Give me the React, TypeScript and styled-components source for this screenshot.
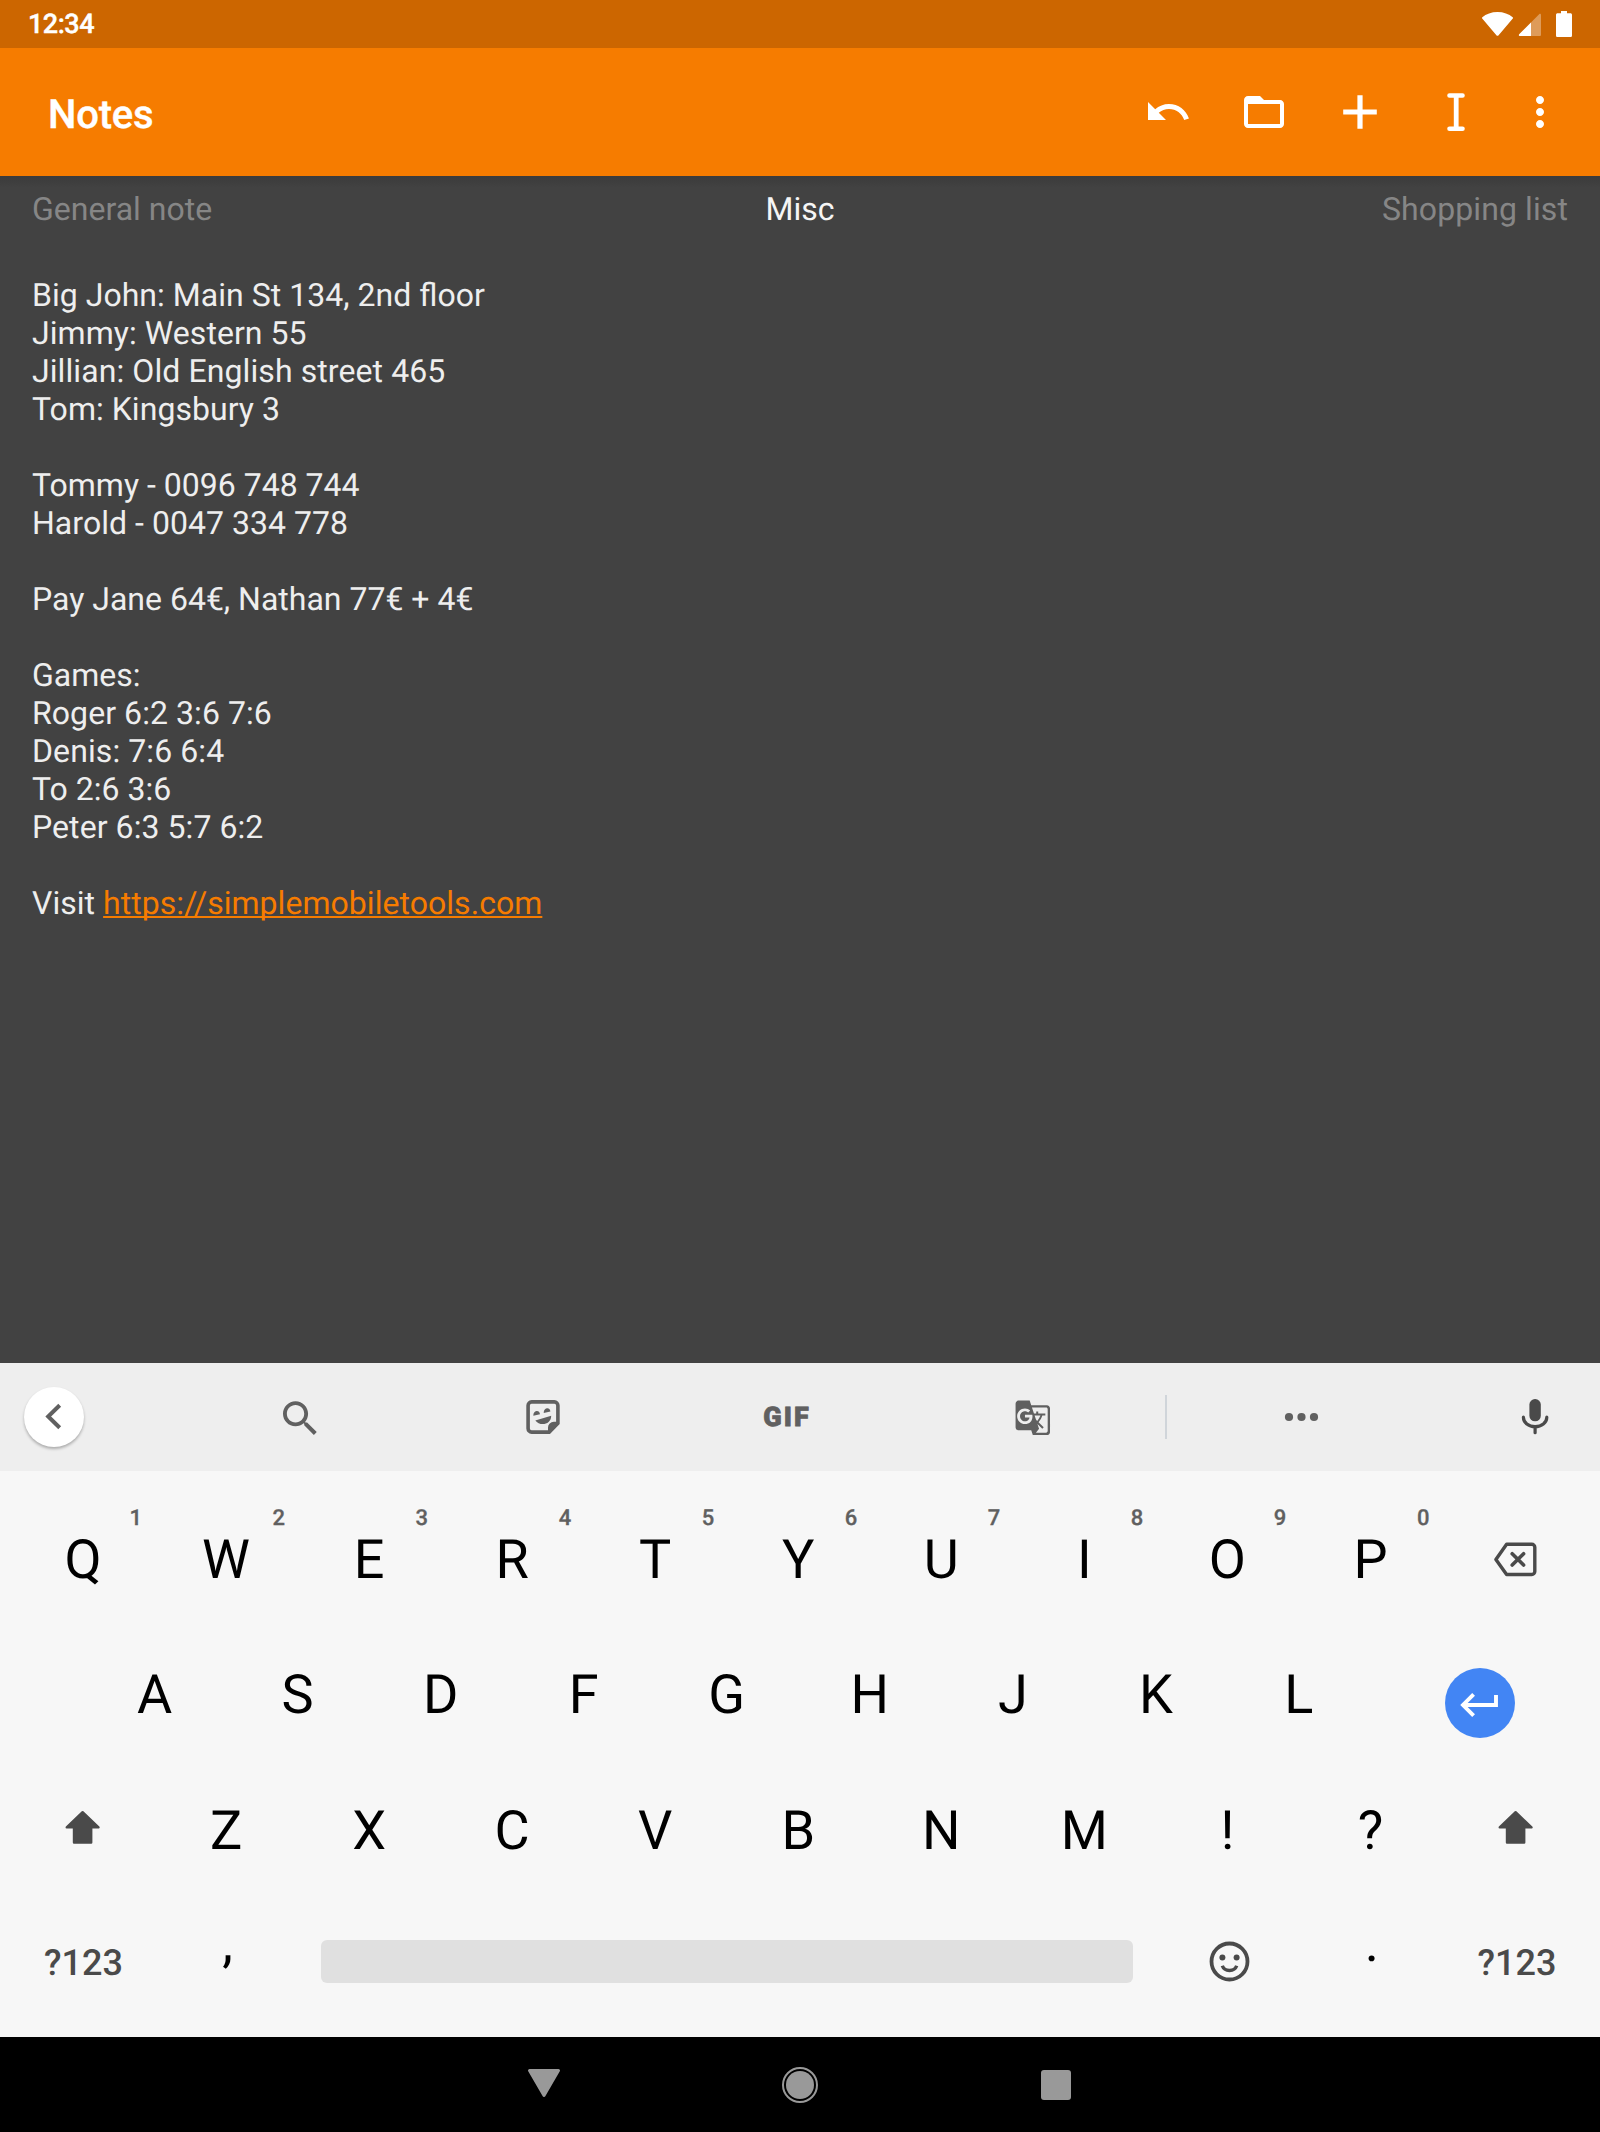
import React from 'react';
import styled, { createGlobalStyle } from 'styled-components';
import { MdGTranslate } from 'react-icons/md';

const GlobalStyle = createGlobalStyle`
  * { box-sizing: border-box; }
  body { margin: 0; background: #000; }
  svg { display: block; flex: none; }
`;

const Screen = styled.div`
  display: flex;
  flex-direction: column;
  width: 1600px;
  height: 2132px;
  overflow: hidden;
  font-family: Roboto, 'Liberation Sans', sans-serif;
  text-rendering: geometricPrecision;
`;

/* ---------- status bar ---------- */

const StatusBar = styled.header`
  display: flex;
  justify-content: space-between;
  height: 48px;
  padding: 0 24px 0 28px;
  background: #cc6600;
  color: #fff;
`;

const Clock = styled.span`
  font-size: 27px;
  font-weight: 500;
  line-height: 49px;
  letter-spacing: -0.5px;
  -webkit-text-stroke: 0.4px #fff;
`;

/* ---------- app bar ---------- */

const AppBar = styled.div`
  display: flex;
  align-items: center;
  justify-content: space-between;
  height: 128px;
  padding: 0 36px 0 48px;
  background: #f67c00;
  color: #fff;
`;

const Title = styled.h1`
  margin: 5px 0 0;
  font-size: 40px;
  font-weight: 500;
  line-height: 48px;
  letter-spacing: -0.2px;
  -webkit-text-stroke: 0.4px #fff;
`;

const Actions = styled.div`
  display: flex;
  gap: 48px;
  > :last-child { margin-left: -12px; }
`;

/* ---------- note ---------- */

const Note = styled.main`
  height: 1187px;
  background: linear-gradient(#3b3b3b, #424242 12px);
  color: #eeeeee;
  font-size: 32px;
  line-height: 38px;
  font-feature-settings: 'liga' 1;
`;

const Tabs = styled.nav`
  display: grid;
  grid-template-columns: 1fr auto 1fr;
  padding: 14px 32px 0;
`;

const Tab = styled.span<{ $active?: boolean; $align?: string; $tracking?: number }>`
  color: ${(p) => (p.$active ? '#f5f5f5' : '#868686')};
  text-align: ${(p) => p.$align || 'left'};
  letter-spacing: ${(p) => p.$tracking || 0}px;
`;

const NoteText = styled.div`
  margin: 48px 32px 0;
`;

const Line = styled.p<{ $tracking?: number }>`
  display: flex;
  height: 38px;
  margin: 0;
  white-space: pre;
  letter-spacing: ${(p) => p.$tracking || 0}px;
`;

const Link = styled.a`
  color: #f67c00;
  text-decoration: underline;
  text-decoration-thickness: 2px;
  text-decoration-skip-ink: none;
  text-underline-offset: 2px;
`;

/* ---------- keyboard ---------- */

const Suggestions = styled.div`
  display: flex;
  align-items: center;
  height: 108px;
  padding-left: 24px;
  background: #eeeeee;
  color: #606060;
`;

const BackButton = styled.div`
  width: 60px;
  height: 60px;
  margin-right: 94.5px;
  border-radius: 50%;
  background: #fff;
  box-shadow: 0 2px 3px rgba(0, 0, 0, 0.28);
`;

const Tool = styled.div<{ $w: number }>`
  display: flex;
  align-items: center;
  justify-content: center;
  width: ${(p) => p.$w}px;
`;

const Gif = styled.span`
  padding-left: 2px;
  font-size: 27px;
  font-weight: 900;
  line-height: 32px;
  letter-spacing: 2px;
  -webkit-text-stroke: 0.8px #606060;
`;

const TranslateTool = styled(Tool)`
  padding: 2px 0 0 7px;
`;

const Divider = styled.div`
  width: 2px;
  height: 44px;
  margin-left: 14.5px;
  background: #d0d5da;
`;

const MicTool = styled(Tool)`
  color: #4a4a4a;
  padding-left: 35px;
`;

const Keys = styled.div`
  display: flex;
  flex-direction: column;
  height: 566px;
  padding: 21px 12px 0 11.5px;
  background: #f7f7f7;
  color: #000;
`;

const KeyRow = styled.div<{ $h?: number; $indent?: boolean }>`
  display: flex;
  height: ${(p) => p.$h || 135.6}px;
  padding-left: ${(p) => (p.$indent ? 71.5 : 0)}px;
  > :last-child { margin-left: auto; }
`;

const Key = styled.div<{ $span?: number }>`
  position: relative;
  display: flex;
  align-items: center;
  justify-content: center;
  width: ${(p) => 143.05 * (p.$span || 1)}px;
  font-size: 54px;
  line-height: 64px;
  color: #000;
`;

const LetterKey = styled(Key)`
  padding-top: 2px;
`;

const EnterKey = styled(Key)`
  padding-right: 2px;
`;

const Hint = styled.span`
  position: absolute;
  top: 14px;
  right: 8.8px;
  width: 20px;
  text-align: center;
  font-size: 22px;
  font-weight: 500;
  line-height: 26px;
  color: #606060;
  -webkit-text-stroke: 0.3px #606060;
`;

const FunctionKey = styled(Key)`
  color: #4a4a4a;
  font-size: 36px;
  font-weight: 500;
  line-height: 42px;
`;

const ShiftKey = styled(FunctionKey)`
  padding-bottom: 3px;
`;

const SymbolsKey = styled(FunctionKey)`
  padding: 2px 0 0 1px;
`;

const EmojiKey = styled(FunctionKey)`
  padding-left: 3px;
`;

const PunctuationKey = styled(Key)`
  padding: 0 0 36px 3px;
`;

const EnterButton = styled.div`
  width: 70px;
  height: 70px;
  margin-top: 15px;
  border-radius: 50%;
  background: #4285f4;
  color: #fff;
`;

const SpaceBar = styled.div`
  width: 812px;
  height: 43px;
  margin: 0 0 2px 1.5px;
  border-radius: 6px;
  background: #e0e0e0;
`;

/* ---------- navigation bar ---------- */

const NavBar = styled.footer`
  display: flex;
  align-items: center;
  justify-content: center;
  gap: 208px;
  height: 95px;
  padding-top: 1px;
  background: #000;
  color: #999;
`;

const Icon = ({ box = 24, size = 48, children }: { box?: number; size?: number; children: React.ReactNode }) => (
  <svg width={size} height={size} viewBox={`0 0 ${box} ${box}`} fill="currentColor">
    {children}
  </svg>
);

const StatusIcons = () => (
  <svg width="100" height="48" viewBox="1476 0 100 48" fill="#fff">
    <path d="M1482.3 17.2C1486 14 1491.500 12 1497.500 12s11.500 2 15.200 5.200c.5.400.5.900.1 1.400l-14.200 16.600c-.6.700-1.600.7-2.200 0l-14.200-16.600c-.4-.5-.4-1 .1-1.400z" />
    <path d="M1541 15.200V35a1 1 0 0 1-1 1h-20.200c-1 0-1.300-1-.6-1.700l20.200-20.200c.6-.6 1.600-.2 1.600 1.100z" opacity=".35" />
    <path d="M1531 22.500V36h-11.200c-1 0-1.300-1-.6-1.700z" />
    <path d="M1561 11h6v2.200h3.400c.9 0 1.600.7 1.600 1.600v20.600c0 .9-.7 1.600-1.600 1.600h-12.800c-.9 0-1.600-.7-1.600-1.600V14.800c0-.9.700-1.600 1.600-1.600h3.400z" />
  </svg>
);

const Shift = () => (
  <Icon box={48}>
    <path
      d="M23.600 7.200 39.500 22.300H32.200V37.500H15V22.300H7.700z"
      stroke="currentColor"
      strokeWidth="2.400"
      strokeLinejoin="round"
    />
  </Icon>
);

const NOTE_LINES: { text: string; tracking?: number }[] = [
  { text: 'Big John: Main St 134, 2nd floor', tracking: 0.03 },
  { text: 'Jimmy: Western 55', tracking: 0.06 },
  { text: 'Jillian: Old English street 465', tracking: 0.09 },
  { text: 'Tom: Kingsbury 3', tracking: 0.04 },
  { text: '' },
  { text: 'Tommy - 0096 748 744' },
  { text: 'Harold - 0047 334 778', tracking: 0.04 },
  { text: '' },
  { text: 'Pay Jane 64€, Nathan 77€ + 4€' },
  { text: '' },
  { text: 'Games:' },
  { text: 'Roger 6:2 3:6 7:6', tracking: 0.07 },
  { text: 'Denis: 7:6 6:4', tracking: 0.09 },
  { text: 'To 2:6 3:6' },
  { text: 'Peter 6:3 5:7 6:2', tracking: 0.07 },
  { text: '' },
];

export default function App() {
  return (
    <Screen>
      <GlobalStyle />
      <StatusBar>
        <Clock>12:34</Clock>
        <StatusIcons />
      </StatusBar>

      <AppBar>
        <Title>Notes</Title>
        <Actions>
          <Icon>
            <path d="M12.5 8c-2.650 0-5.050.99-6.900 2.600L2 7v9h9l-3.620-3.620c1.390-1.160 3.160-1.880 5.120-1.880 3.540 0 6.550 2.310 7.600 5.500l2.370-.78C21.080 11.030 17.150 8 12.500 8z" />
          </Icon>
          <Icon>
            <path d="M20 6h-8l-2-2H4c-1.100 0-1.990.9-1.990 2L2 18c0 1.100.9 2 2 2h16c1.100 0 2-.9 2-2V8c0-1.100-.9-2-2-2zm0 12H4V8h16v10z" />
          </Icon>
          <Icon box={48}>
            <path d="M21.400 7.200h5.200v14.200h14.200v5.200H26.600v14.200h-5.200V26.600H7.200v-5.200h14.200z" />
          </Icon>
          <Icon box={48}>
            <path
              d="M17.500 7.500h13M17.500 40.700h13"
              stroke="currentColor"
              strokeWidth="4.600"
              strokeLinecap="round"
            />
            <path d="M21.800 7h4.800v34h-4.800z" />
          </Icon>
          <Icon>
            <path d="M12 8c1.100 0 2-.9 2-2s-.9-2-2-2-2 .9-2 2 .9 2 2 2zm0 2c-1.100 0-2 .9-2 2s.9 2 2 2 2-.9 2-2-.9-2-2-2zm0 6c-1.100 0-2 .9-2 2s.9 2 2 2 2-.9 2-2-.9-2-2-2z" />
          </Icon>
        </Actions>
      </AppBar>

      <Note>
        <Tabs>
          <Tab>General note</Tab>
          <Tab $active>Misc</Tab>
          <Tab $align="right" $tracking={0.1}>Shopping list</Tab>
        </Tabs>
        <NoteText>
          {NOTE_LINES.map((line, i) => (
            <Line key={i} $tracking={line.tracking}>{line.text}</Line>
          ))}
          <Line $tracking={0.04}>
            <span>Visit </span>
            <Link>https://simplemobiletools.com</Link>
          </Line>
        </NoteText>
      </Note>

      <Suggestions>
        <BackButton>
          <Icon box={60} size={60}>
            <path d="M35.700 18.200 24.200 29.500 35.700 40.800" fill="none" stroke="currentColor" strokeWidth="4" />
          </Icon>
        </BackButton>
        <Tool $w={243}>
          <Icon box={48}>
            <path
              transform="translate(1.200 2.400) scale(1.930)"
              d="M15.500 14h-.79l-.28-.27C15.410 12.590 16 11.110 16 9.500 16 5.910 13.090 3 9.500 3S3 5.910 3 9.500 5.910 16 9.500 16c1.610 0 3.090-.59 4.230-1.570l.27.28v.79l5 4.990L20.490 19l-4.990-5zm-6 0C7.010 14 5 11.990 5 9.500S7.010 5 9.500 5 14 7.010 14 9.500 11.990 14 9.500 14z"
            />
          </Icon>
        </Tool>
        <Tool $w={243}>
          <Icon box={48}>
            <path
              d="M12.600 8.900h22.800a3.500 3.500 0 0 1 3.500 3.500V30.200L30.200 39.100H12.600a3.500 3.500 0 0 1-3.500-3.500V12.400a3.500 3.500 0 0 1 3.500-3.500z"
              fill="none"
              stroke="currentColor"
              strokeWidth="3.600"
            />
            <path d="M39.500 28.700H34.800a5.800 5.800 0 0 0-5.800 5.800V40h2l8.500-9z" />
            <path d="M14.300 22.800c0-2.700 1.300-4.400 3.200-4.700 1.900-.2 3.100.9 3.500 3.200zM24.700 20c0-2.700 1.300-4.400 3.200-4.700 1.900-.2 3.100.9 3.500 3.200z" />
            <path d="M16.300 27.400 32.200 22.700C32.200 31.800 20.800 33.600 16.300 27.400z" />
          </Icon>
        </Tool>
        <Tool $w={243}>
          <Gif>GIF</Gif>
        </Tool>
        <TranslateTool $w={243}>
          <MdGTranslate size={37.6} />
        </TranslateTool>
        <Divider />
        <Tool $w={268}>
          <Icon box={48}>
            <circle cx="12" cy="24" r="4.100" />
            <circle cx="24.500" cy="24" r="4.100" />
            <circle cx="37" cy="24" r="4.100" />
          </Icon>
        </Tool>
        <MicTool $w={165}>
          <Icon box={48}>
            <rect x="18.400" y="6" width="11.400" height="22.300" rx="5.600" />
            <path
              d="M12.400 24.200c0 5.300 5.200 9.500 11.700 9.500s11.700-4.200 11.700-9.500M24.100 33.700v6"
              fill="none"
              stroke="currentColor"
              strokeWidth="3.200"
              strokeLinecap="round"
            />
          </Icon>
        </MicTool>
      </Suggestions>

      <Keys>
        <KeyRow>
          {'QWERTYUIOP'.split('').map((letter, i) => (
            <LetterKey key={letter}>
              {letter}
              <Hint>{(i + 1) % 10}</Hint>
            </LetterKey>
          ))}
          <FunctionKey>
            <Icon box={48}>
              <path
                d="M14.600 8.200H39.800a3 3 0 0 1 3 3V35.500a3 3 0 0 1-3 3H14.600L3.900 23.400z"
                fill="none"
                stroke="currentColor"
                strokeWidth="3.400"
                strokeLinejoin="round"
              />
              <path
                d="M20.200 17.700 31.600 29.100M31.600 17.700 20.200 29.100"
                stroke="currentColor"
                strokeWidth="3.600"
                strokeLinecap="round"
              />
            </Icon>
          </FunctionKey>
        </KeyRow>
        <KeyRow $indent>
          {'ASDFGHJKL'.split('').map((letter) => (
            <LetterKey key={letter}>{letter}</LetterKey>
          ))}
          <EnterKey $span={1.5}>
            <EnterButton>
              <Icon box={70} size={70}>
                <path
                  d="M28.600 26.300 18 37 28.600 47.700M18 37H51V27"
                  fill="none"
                  stroke="currentColor"
                  strokeWidth="3.900"
                />
              </Icon>
            </EnterButton>
          </EnterKey>
        </KeyRow>
        <KeyRow>
          <ShiftKey>
            <Shift />
          </ShiftKey>
          {'ZXCVBNM!?'.split('').map((letter) => (
            <LetterKey key={letter}>{letter}</LetterKey>
          ))}
          <ShiftKey>
            <Shift />
          </ShiftKey>
        </KeyRow>
        <KeyRow $h={127}>
          <SymbolsKey>?123</SymbolsKey>
          <PunctuationKey>,</PunctuationKey>
          <Key $span={6}>
            <SpaceBar />
          </Key>
          <EmojiKey>
            <Icon box={48}>
              <circle cx="24.500" cy="23.500" r="18" fill="none" stroke="currentColor" strokeWidth="3.800" />
              <circle cx="17.400" cy="19.600" r="3" />
              <circle cx="31.600" cy="19.600" r="3" />
              <path d="M17.300 27.800C19.500 34 29.500 34 31.700 27.800" fill="none" stroke="currentColor" strokeWidth="3.400" />
            </Icon>
          </EmojiKey>
          <PunctuationKey>.</PunctuationKey>
          <SymbolsKey>?123</SymbolsKey>
        </KeyRow>
      </Keys>

      <NavBar>
        <Icon box={48}>
          <path
            d="M9.500 9.500h29L24 34.500z"
            stroke="currentColor"
            strokeWidth="3"
            strokeLinejoin="round"
          />
        </Icon>
        <Icon box={48}>
          <circle cx="24" cy="24" r="17" fill="none" stroke="currentColor" strokeWidth="2" />
          <circle cx="24" cy="24" r="14" />
        </Icon>
        <Icon box={48}>
          <rect x="9" y="9" width="30" height="30" rx="3" />
        </Icon>
      </NavBar>
    </Screen>
  );
}
